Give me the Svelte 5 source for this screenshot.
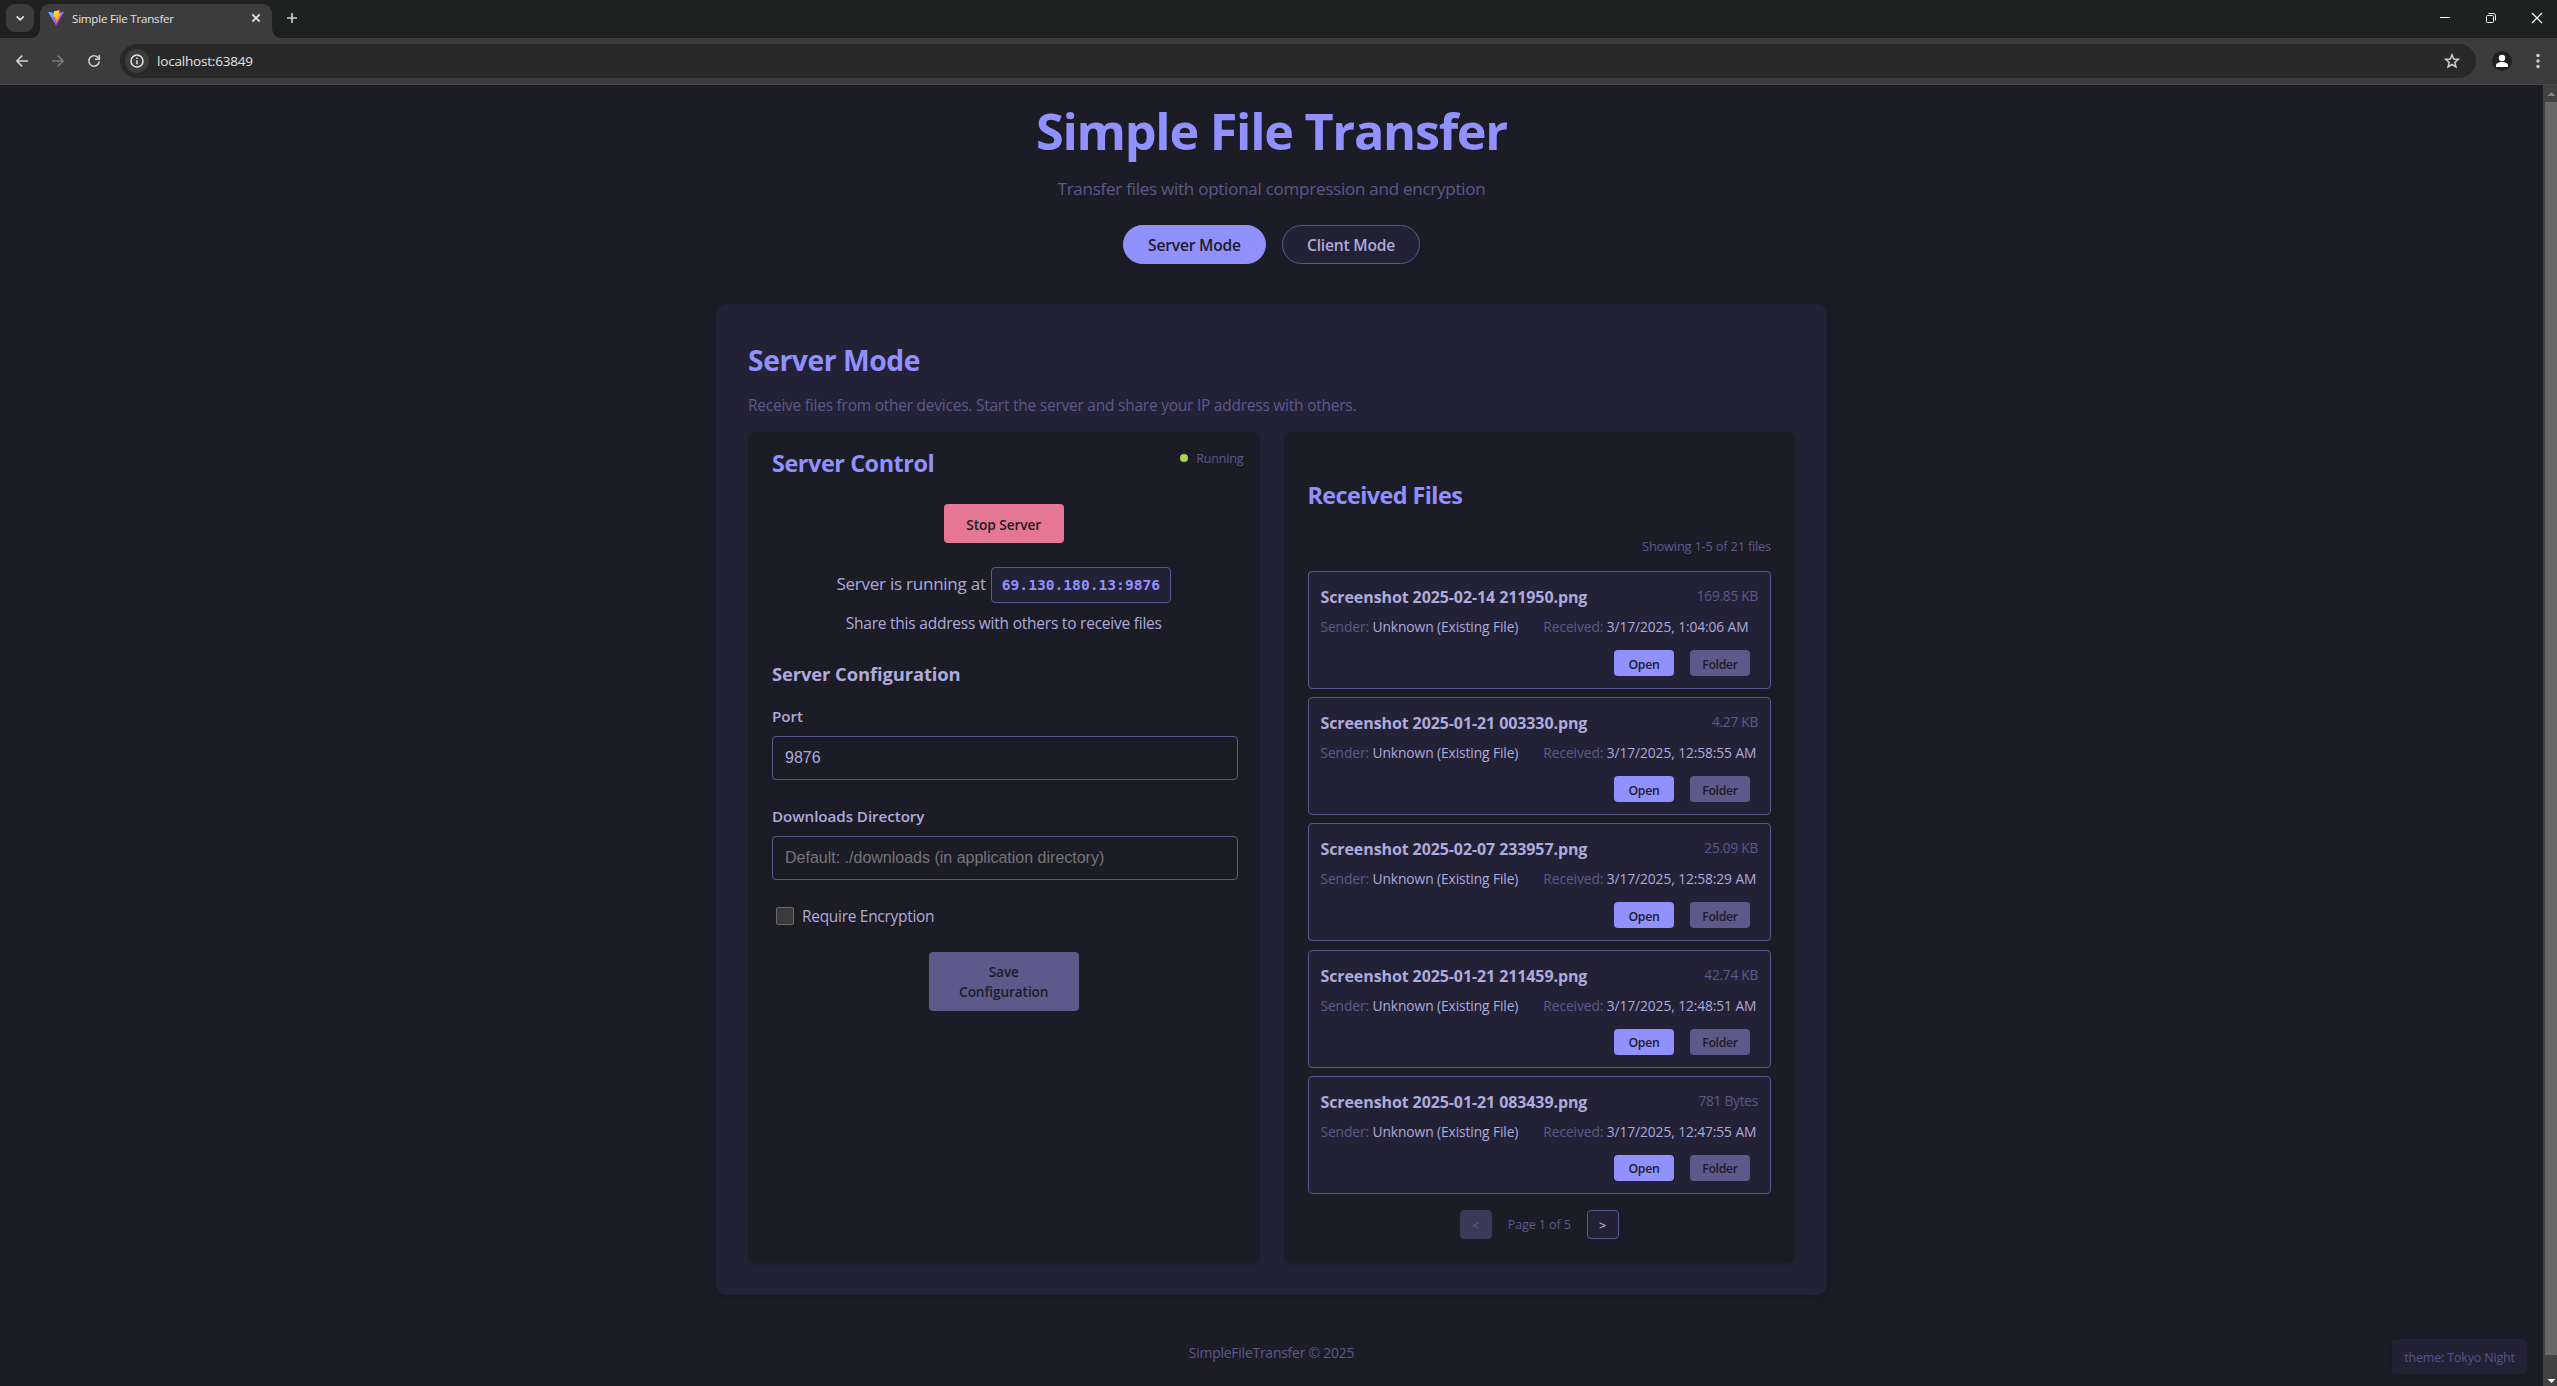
<script>
  const files = [
    { name: 'Screenshot 2025-02-14 211950.png', size: '169.85 KB', received: '3/17/2025, 1:04:06 AM' },
    { name: 'Screenshot 2025-01-21 003330.png', size: '4.27 KB', received: '3/17/2025, 12:58:55 AM' },
    { name: 'Screenshot 2025-02-07 233957.png', size: '25.09 KB', received: '3/17/2025, 12:58:29 AM' },
    { name: 'Screenshot 2025-01-21 211459.png', size: '42.74 KB', received: '3/17/2025, 12:48:51 AM' },
    { name: 'Screenshot 2025-01-21 083439.png', size: '781 Bytes', received: '3/17/2025, 12:47:55 AM' }
  ];
  let port = $state('9876');
  let directory = $state('');
</script>

<div class="window">
  <div class="tabstrip">
    <button class="tab-search" aria-label="Search tabs">
      <svg width="28" height="28" viewBox="0 0 28 28"><path d="M10.7 12.3l3.5 3.5 3.5-3.5" fill="none" stroke="#e3e3e3" stroke-width="1.8" /></svg>
    </button>
    <div class="tab">
      <svg class="favicon" width="16" height="16" viewBox="0 0 410 404">
        <defs>
          <linearGradient id="shield" x1="6" y1="33" x2="235" y2="344" gradientUnits="userSpaceOnUse">
            <stop stop-color="#41D1FF" /><stop offset="1" stop-color="#BD34FE" />
          </linearGradient>
          <linearGradient id="bolt" x1="194" y1="9" x2="236" y2="293" gradientUnits="userSpaceOnUse">
            <stop stop-color="#FFEA83" /><stop offset=".08" stop-color="#FFDD35" /><stop offset="1" stop-color="#FFA800" />
          </linearGradient>
        </defs>
        <path fill="url(#shield)" d="M399.6 59.5L215.6 388.5c-3.8 6.8-13.6 6.8-17.4.1L10.6 59.6c-4.2-7.4 2.1-16.3 10.5-14.8l184.2 32.9c1.2.2 2.4.2 3.5 0l180.3-32.8c8.4-1.6 14.8 7.3 10.5 14.6z" />
        <path fill="url(#bolt)" d="M293 1.6L156.8 28.3c-2.2.4-3.900 2.300-4 4.600l-8.400 141.500c-.2 3.300 2.900 5.900 6.100 5.200l37.900-8.700c3.500-.8 6.800 2.300 6 5.900L183.200 231.900c-.8 3.700 2.700 6.900 6.300 5.800l23.400-7.100c3.600-1.100 7.100 2.100 6.400 5.800l-17.900 86.700c-1.100 5.400 6.100 8.400 9.100 3.700l2-3.100 111-221.500c1.900-3.700-1.400-7.900-5.400-7.200l-39 7.500c-3.700.7-6.800-2.700-5.800-6.300L298.700 7.900c1.100-3.600-2.100-7.100-5.700-6.300z" />
      </svg>
      <span class="tab-title">Simple File Transfer</span>
      <svg width="16" height="16" viewBox="0 0 16 16"><path d="M4.3 4.300l7.400 7.400M11.700 4.300l-7.400 7.400" stroke="#e3e3e3" stroke-width="1.8" /></svg>
    </div>
    <svg class="new-tab" width="16" height="16" viewBox="0 0 16 16"><path d="M8 3v10M3 8h10" stroke="#d0d0d0" stroke-width="1.6" /></svg>
    <div class="window-buttons">
      <svg width="12" height="12" viewBox="0 0 12 12"><path d="M1 5.500h10" stroke="#fff" /></svg>
      <svg width="12" height="12" viewBox="0 0 12 12" fill="none" stroke="#fff"><rect x="1.500" y="3.500" width="7" height="7" rx="1" /><path d="M3.500 1.500h5a2 2 0 0 1 2 2v5" /></svg>
      <svg width="12" height="12" viewBox="0 0 12 12"><path d="M1 1l10 10M11 1L1 11" stroke="#fff" stroke-width="1.2" /></svg>
    </div>
  </div>

  <div class="toolbar">
    <div class="nav">
      <svg width="16" height="16" viewBox="0 0 16 16" fill="none" stroke="#d0d0d0" stroke-width="1.6"><path d="M14 8H3M8.200 2.600L2.800 8l5.400 5.400" /></svg>
      <svg width="16" height="16" viewBox="0 0 16 16" fill="none" stroke="#7c7c7c" stroke-width="1.6"><path d="M2 8h11M7.800 2.600L13.200 8l-5.400 5.400" /></svg>
      <svg width="16" height="16" viewBox="0 0 16 16" fill="none" stroke="#d0d0d0" stroke-width="1.6"><path d="M13.200 8.300A5.200 5.200 0 1 1 11.700 4.300L13 5.600" /><path d="M13.300 2v4.200H9" /></svg>
    </div>
    <div class="omnibox">
      <span class="site-info">
        <svg width="16" height="16" viewBox="0 0 16 16" fill="none" stroke="#e3e3e3" stroke-width="1.5"><circle cx="8" cy="8" r="6" /><path d="M8 7.200v4M8 4.500v1.500" /></svg>
      </span>
      <span class="url">localhost:63849</span>
      <svg width="18" height="18" viewBox="0 0 18 18" fill="none" stroke="#d0d0d0" stroke-width="1.5"><path d="M9 2.800l1.700 4.300 4.600.3-3.500 3 1.100 4.500L9 12.500l-3.900 2.400 1.100-4.500-3.500-3 4.600-.3z" /></svg>
    </div>
    <svg class="avatar" width="20" height="20" viewBox="0 0 20 20"><circle cx="10" cy="10" r="10" fill="#1f2120" /><circle cx="10" cy="7" r="3.200" fill="#fff" /><path d="M4 16v-1.700c0-2 3-3.300 6-3.300s6 1.300 6 3.300V16z" fill="#fff" /></svg>
    <svg class="kebab" width="4" height="16" viewBox="0 0 4 16" fill="#d0d0d0"><circle cx="2" cy="2.500" r="1.700" /><circle cx="2" cy="8" r="1.700" /><circle cx="2" cy="13.500" r="1.700" /></svg>
  </div>

  <div class="viewport">
    <div class="page">
      <header>
        <h1>Simple File Transfer</h1>
        <p class="tagline">Transfer files with optional compression and encryption</p>
        <div class="modes">
          <button class="mode active">Server Mode</button>
          <button class="mode client">Client Mode</button>
        </div>
      </header>

      <main class="card">
        <h2>Server Mode</h2>
        <p class="intro">Receive files from other devices. Start the server and share your IP address with others.</p>
        <div class="panels">
          <section class="panel control">
            <div class="panel-head">
              <h3 class="control-title">Server Control</h3>
              <div class="status"><i></i><span>Running</span></div>
            </div>
            <button class="stop">Stop Server</button>
            <div class="address"><span>Server is running at</span><code>69.130.180.13:9876</code></div>
            <p class="share">Share this address with others to receive files</p>
            <h4>Server Configuration</h4>
            <label class="field"><span>Port</span><input bind:value={port} /></label>
            <label class="field"><span>Downloads Directory</span><input bind:value={directory} placeholder="Default: ./downloads (in application directory)" /></label>
            <div class="check"><i class="box"></i><span>Require Encryption</span></div>
            <button class="save">Save Configuration</button>
          </section>

          <section class="panel received">
            <h3 class="received-title">Received Files</h3>
            <p class="showing">Showing 1-5 of 21 files</p>
            <ul>
              {#each files as file}
                <li>
                  <div class="file-head"><b>{file.name}</b><span class="size">{file.size}</span></div>
                  <div class="meta">
                    <span class="sender"><em>Sender:</em> Unknown (Existing File)</span>
                    <span class="date"><em>Received:</em> {file.received}</span>
                  </div>
                  <div class="actions">
                    <button class="open">Open</button>
                    <button class="folder">Folder</button>
                  </div>
                </li>
              {/each}
            </ul>
            <div class="pager">
              <button class="prev">&lt;</button>
              <span>Page 1 of 5</span>
              <button>&gt;</button>
            </div>
          </section>
        </div>
      </main>

      <footer>SimpleFileTransfer © 2025</footer>
      <div class="theme">theme: Tokyo Night</div>
    </div>

    <div class="scrollbar">
      <svg width="14" height="17" viewBox="0 0 14 17"><path d="M4.500 11l4-4 4 4z" fill="#868686" /></svg>
      <div class="thumb"></div>
      <svg width="14" height="31" viewBox="0 0 14 31"><path d="M4.500 24h8l-4 4z" fill="#fff" /></svg>
    </div>
  </div>
</div>

<style>
  :global(body) { margin: 0; background: #1c1c27; }
  * { box-sizing: border-box; }
  h1, h2, h3, h4, p, ul { margin: 0; padding: 0; }
  svg { display: block; flex: none; }
  button { border: 0; padding: 0; margin: 0; font-family: inherit; cursor: pointer; }
  em, i { font-style: normal; }

  .window {
    width: 100%;
    height: 1386px;
    display: flex;
    flex-direction: column;
    overflow: hidden;
    font-family: 'Open Sans', 'Noto Sans', sans-serif;
    white-space: nowrap;
  }

  /* browser chrome */
  .tabstrip { height: 38px; flex: none; display: flex; align-items: flex-start; padding: 4px 13px 0 6px; background: #1f2120; }
  .tab-search { width: 28px; height: 28px; border-radius: 9px; background: #3c3c3c; }
  .tab {
    position: relative;
    width: 232px;
    height: 34px;
    margin-left: 6px;
    padding: 0 8px 6px;
    display: flex;
    align-items: center;
    border-radius: 9px 9px 0 0;
    background: #3c3c3c;
  }
  .tab::before, .tab::after { content: ''; position: absolute; bottom: 0; width: 9px; height: 9px; }
  .tab::before { left: -9px; background: radial-gradient(circle at 0 0, transparent 8.5px, #3c3c3c 9px); }
  .tab::after { right: -9px; background: radial-gradient(circle at 100% 0, transparent 8.5px, #3c3c3c 9px); }
  .tab-title { flex: 1; padding: 1px 0 0 8px; font-size: 11.6px; letter-spacing: -0.22px; color: #e3e3e3; }
  .new-tab { margin: 6px 0 0 12px; }
  .window-buttons { margin: 8px 0 0 auto; display: flex; gap: 34px; padding-right: 1px; }
  .toolbar {
    height: 47px;
    flex: none;
    display: flex;
    align-items: center;
    padding: 0 17px 1px 14px;
    background: linear-gradient(#3c3c3c 46px, #474747 46px);
  }
  .nav { display: flex; gap: 20px; }
  .omnibox {
    flex: 1;
    height: 34px;
    margin: 0 16px 0 18px;
    padding: 0 15px 0 5px;
    display: flex;
    align-items: center;
    border-radius: 17px;
    background: #282828;
  }
  .site-info { width: 24px; height: 24px; display: grid; place-items: center; border-radius: 50%; background: #3c3c3c; }
  .url { flex: 1; padding-left: 8px; font-size: 13.5px; letter-spacing: -0.19px; color: #e3e3e3; }
  .kebab { margin-left: 24px; }

  .viewport { flex: 1; min-height: 0; display: flex; }
  .page {
    position: relative;
    flex: 1;
    display: flex;
    flex-direction: column;
    align-items: center;
    background: #1c1c27;
    color: #aeaadb;
  }
  .scrollbar { width: 14px; display: flex; flex-direction: column; background: #424242; }
  .thumb { flex: 1; margin-left: 2px; background: #686868; }

  /* page header */
  header { width: 100%; height: 219px; padding-top: 16px; display: flex; flex-direction: column; align-items: center; }
  h1 { height: 60px; font-size: 50.4px; line-height: 60px; letter-spacing: -1.3px; color: #9090ff; }
  .tagline { margin-top: 15px; font-size: 17px; line-height: 26px; letter-spacing: -0.25px; color: #5d598b; }
  .modes { margin-top: 23px; display: flex; gap: 16px; }
  .mode {
    width: 138px;
    height: 39px;
    padding-top: 1px;
    border: 1px solid #5d598b;
    border-radius: 20px;
    background: #232136;
    color: #aeaadb;
    font-size: 15.6px;
    font-weight: 600;
    letter-spacing: -0.2px;
  }
  .mode.active { width: 143px; background: #9090ff; border-color: #9090ff; color: #1c1c27; }

  /* main card */
  .card {
    width: 1111px;
    height: 991px;
    flex: none;
    padding: 36px 32px 32px;
    display: flex;
    flex-direction: column;
    border-radius: 10px;
    background: #232136;
    box-shadow: 0 4px 8px rgba(0, 0, 0, 0.14);
  }
  h2 { font-size: 28.3px; line-height: 41px; letter-spacing: -0.45px; color: #9090ff; }
  .intro { margin-top: 12px; font-size: 15.5px; line-height: 24px; letter-spacing: -0.24px; color: #5d598b; }
  .panels { flex: 1; margin-top: 15px; display: grid; grid-template-columns: 1fr 1fr; gap: 24px; }
  .panel { display: flex; flex-direction: column; padding: 0 24px; border-radius: 8px; background: #1c1c27; box-shadow: 0 2px 5px rgba(0, 0, 0, 0.1); }
  h3 { font-size: 23.4px; line-height: 32px; color: #9090ff; }

  .panel-head { display: flex; justify-content: space-between; padding-top: 15px; margin-right: -8px; }
  .control-title { letter-spacing: -0.43px; }
  .status { height: 22px; display: flex; align-items: center; gap: 8px; font-size: 12.6px; letter-spacing: -0.2px; color: #5d598b; }
  .status span { padding-top: 1px; }
  .status i { width: 8px; height: 8px; border-radius: 50%; background: #a3d850; }
  .stop {
    align-self: center;
    width: 120px;
    height: 39px;
    margin-top: 25px;
    padding-top: 2px;
    border-radius: 4px;
    background: #e57793;
    color: #1c1c27;
    font-size: 13.7px;
    font-weight: 600;
    letter-spacing: -0.08px;
  }
  .address { margin-top: 24px; height: 36px; display: flex; justify-content: center; align-items: center; gap: 5px; }
  .address span { padding-bottom: 3px; font-size: 17px; letter-spacing: -0.24px; }
  code {
    height: 36px;
    padding: 0 10px;
    border: 1px solid #5d598b;
    border-radius: 4px;
    background: #232136;
    color: #9090ff;
    font: bold 14.62px/34px 'DejaVu Sans Mono', monospace;
  }
  .share { margin-top: 8px; text-align: center; font-size: 15.5px; line-height: 24px; letter-spacing: -0.23px; }
  h4 { margin-top: 25px; font-size: 18.4px; line-height: 28px; letter-spacing: -0.11px; }
  .field { display: flex; flex-direction: column; gap: 9px; margin-top: 25px; font-size: 15.2px; font-weight: 600; line-height: 22px; letter-spacing: -0.07px; }
  h4 + .field { margin-top: 17px; }
  input {
    height: 44px;
    margin-right: -2px;
    padding: 0 12px;
    border: 1px solid #5d598b;
    border-radius: 4px;
    background: #1c1c27;
    color: #aeaadb;
    font: 16px 'Liberation Sans', Arial, sans-serif;
  }
  input::placeholder { color: #757575; }
  .check { margin: 24px 0 0 4px; height: 24px; display: flex; align-items: center; gap: 8px; font-size: 15.5px; line-height: 24px; letter-spacing: -0.3px; }
  .box { width: 18px; height: 18px; border: 1px solid #6b6b6b; border-radius: 2px; background: #3b3b3b; }
  .save {
    align-self: center;
    width: 150px;
    height: 59px;
    margin-top: 24px;
    padding: 1px 24px 0;
    border-radius: 4px;
    background: #5d598b;
    color: #1c1c27;
    font-size: 13.7px;
    font-weight: 600;
    line-height: 20px;
    letter-spacing: -0.12px;
    white-space: normal;
  }

  .received-title { padding-top: 47px; letter-spacing: -0.58px; }
  .showing { margin: 25px 0 15px; text-align: right; font-size: 12.9px; line-height: 20px; letter-spacing: -0.23px; color: #5d598b; }
  ul { list-style: none; display: flex; flex-direction: column; gap: 8.2px; }
  li { height: 118px; padding: 13px 12px 0; border: 1px solid #5d598b; border-radius: 4px; background: #232136; }
  .file-head { display: flex; justify-content: space-between; line-height: 24px; font-size: 16px; letter-spacing: -0.1px; }
  .size { margin-top: -1px; font-size: 13.7px; letter-spacing: -0.25px; color: #5d598b; }
  .meta { margin-top: 8px; display: flex; gap: 25px; font-size: 13.8px; line-height: 20px; letter-spacing: -0.1px; }
  em { color: #5d598b; }
  .actions { margin: 13px 8px 0 0; display: flex; justify-content: flex-end; gap: 16px; }
  .actions button { width: 60px; height: 26px; padding-top: 2px; border-radius: 4px; color: #1c1c27; font-size: 12.3px; font-weight: 600; letter-spacing: -0.3px; }
  .open { background: #9090ff; }
  .folder { background: #5d598b; }
  .pager { margin-top: 16px; display: flex; justify-content: center; align-items: center; gap: 16px; font-size: 12.5px; letter-spacing: -0.1px; color: #5d598b; }
  .pager span { padding-top: 1px; }
  .pager button { width: 32px; height: 29px; padding-top: 1px; border: 1px solid #5d598b; border-radius: 4px; background: #232136; color: #aeaadb; font-size: 12.8px; font-weight: 600; }
  .pager .prev { background: #5d598b; color: #9a96c0; opacity: 0.5; }

  footer { margin-top: 46px; font-size: 13.9px; line-height: 23px; letter-spacing: -0.21px; color: #5d598b; }
  .theme {
    position: absolute;
    right: 16px;
    bottom: 12px;
    width: 135px;
    height: 35px;
    border-radius: 4px;
    background: #232136;
    box-shadow: 0 2px 5px rgba(0, 0, 0, 0.1);
    color: #57538a;
    font-size: 12.5px;
    line-height: 37px;
    letter-spacing: -0.18px;
    text-align: center;
  }
</style>
